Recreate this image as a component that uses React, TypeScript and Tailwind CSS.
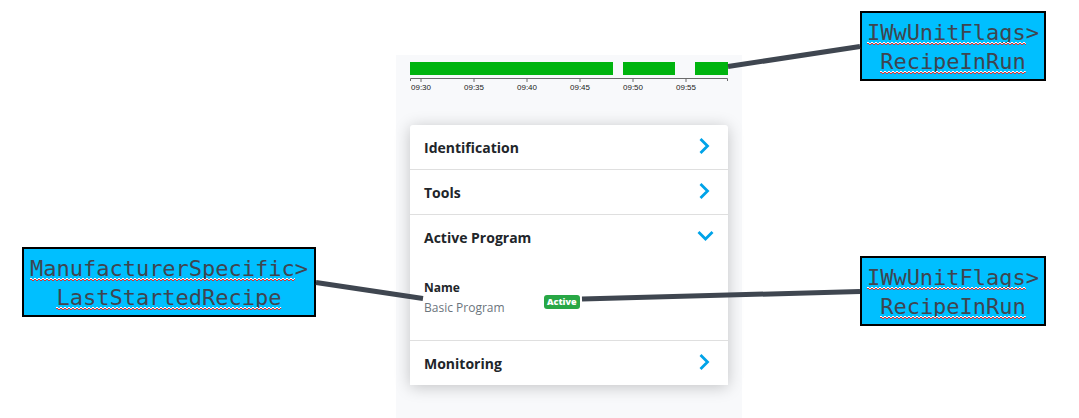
import { useState } from "react";
import type { ReactNode } from "react";

function Misspelled({ children }: { children: ReactNode }) {
  return (
    <span className="relative inline-block">
      {children}
      <svg className="absolute bottom-0.5 left-0 h-[3px] w-full" aria-hidden="true">
        <defs>
          <pattern id="squiggle" width="4" height="3" patternUnits="userSpaceOnUse">
            <path d="M0 0H2V1H0Z" fill="#ffffff" />
            <path d="M2 1H4V2H2Z" fill="#f4dfe4" />
            <path d="M0 1H2V2H0Z" fill="#d13438" />
            <path d="M2 2H4V3H2Z" fill="#d13438" />
          </pattern>
        </defs>
        <rect width="100%" height="3" fill="url(#squiggle)" />
      </svg>
    </span>
  );
}

function Callout({ scope, field }: { scope: string; field: string }) {
  return (
    <div className="border-2 border-black bg-[#00bfff] pt-[5px] pb-[3px] text-center font-['DejaVu_Sans_Mono',monospace] text-[22px] leading-[29px] text-[#3f4550]">
      <div>
        <Misspelled>{scope}</Misspelled>&gt;
      </div>
      <div>
        <Misspelled>{field}</Misspelled>
      </div>
    </div>
  );
}

const runs = [
  { x: 0, width: 203 },
  { x: 213, width: 52 },
  { x: 285, width: 33 },
];
const ticks = ["09:30", "09:35", "09:40", "09:45", "09:50", "09:55"];

function Timeline() {
  return (
    <svg viewBox="0 0 318 32" className="block w-full" role="img" aria-label="Recipe run times">
      {runs.map((run) => (
        <rect key={run.x} x={run.x} y="0" width={run.width} height="13" fill="#00b40f" />
      ))}
      <path d="M0.5 19V16.5H317.5V19" fill="none" stroke="#6b6b6b" />
      {ticks.map((label, i) => (
        <g key={label}>
          <path d={`M${11 + i * 53} 16v4`} stroke="#6b6b6b" />
          <text
            x={11 + i * 53}
            y="28"
            textAnchor="middle"
            className="fill-[#222222] font-['Liberation_Sans',sans-serif] text-[8px]"
          >
            {label}
          </text>
        </g>
      ))}
    </svg>
  );
}

function Section({
  title,
  initiallyOpen = false,
  children,
}: {
  title: string;
  initiallyOpen?: boolean;
  children?: ReactNode;
}) {
  const [open, setOpen] = useState(initiallyOpen);
  return (
    <section className="border-b border-[#dfdfdf] last:border-b-0">
      <button
        type="button"
        aria-expanded={open}
        onClick={() => setOpen(!open)}
        className="flex h-11 w-full items-center justify-between px-3.5 pb-[3px] text-[14px] font-bold"
      >
        <span className="pt-[3px]">{title}</span>
        <svg width="18" height="18" viewBox="0 0 18 18" fill="none" stroke="#00a3e8" strokeWidth="2.8" aria-hidden="true">
          {open ? <path d="M2.5 5L9.5 12L16.5 5" /> : <path d="M4.5 2L11.5 9L4.5 16" />}
        </svg>
      </button>
      {open && children}
    </section>
  );
}

export default function App() {
  return (
    <main className="flex min-h-screen justify-center overflow-hidden bg-white pr-[11px] font-['Open_Sans','Noto_Sans',sans-serif] text-[#212529]">
      <div className="relative flex">
        <div className="w-[294px] shrink-0 pt-[247px]">
          <Callout scope="ManufacturerSpecific" field="LastStartedRecipe" />
        </div>

        <div className="mr-[118px] ml-20 flex w-[346px] shrink-0 flex-col pt-[55px]">
          <div className="flex-1 bg-[#f8f9fb] px-3.5 pt-[7px] pb-8">
            <Timeline />
            <div className="mt-[31px] rounded-t-[3px] bg-white shadow-[0_2px_16px_rgba(0,0,0,0.22)]">
              <Section title="Identification" />
              <Section title="Tools" />
              <Section title="Active Program" initiallyOpen>
                <div className="flex h-[81px] items-start px-3.5 pt-[19px]">
                  <dl className="w-[120px]">
                    <dt className="text-[12px] leading-5 font-bold">Name</dt>
                    <dd className="text-[12px] leading-5 text-[#6c757d]">Basic Program</dd>
                  </dl>
                  <span className="mt-[17px] rounded-[3px] bg-[#28a745] px-[3px] text-[9px] leading-[14px] font-extrabold text-white">
                    Active
                  </span>
                </div>
              </Section>
              <Section title="Monitoring" />
            </div>
          </div>
        </div>

        <div className="flex w-[186px] shrink-0 flex-col gap-[175px] pt-[11px]">
          <Callout scope="IWwUnitFlags" field="RecipeInRun" />
          <Callout scope="IWwUnitFlags" field="RecipeInRun" />
        </div>

        <svg
          className="pointer-events-none absolute top-0 left-0 h-[418px] w-full"
          fill="none"
          stroke="#3f4650"
          strokeWidth="5"
          aria-hidden="true"
        >
          <path d="M294 282.5L401 298.5" />
          <path d="M706 66.5L838 46.5" />
          <path d="M560 299L838 291.5" />
        </svg>
      </div>
    </main>
  );
}
